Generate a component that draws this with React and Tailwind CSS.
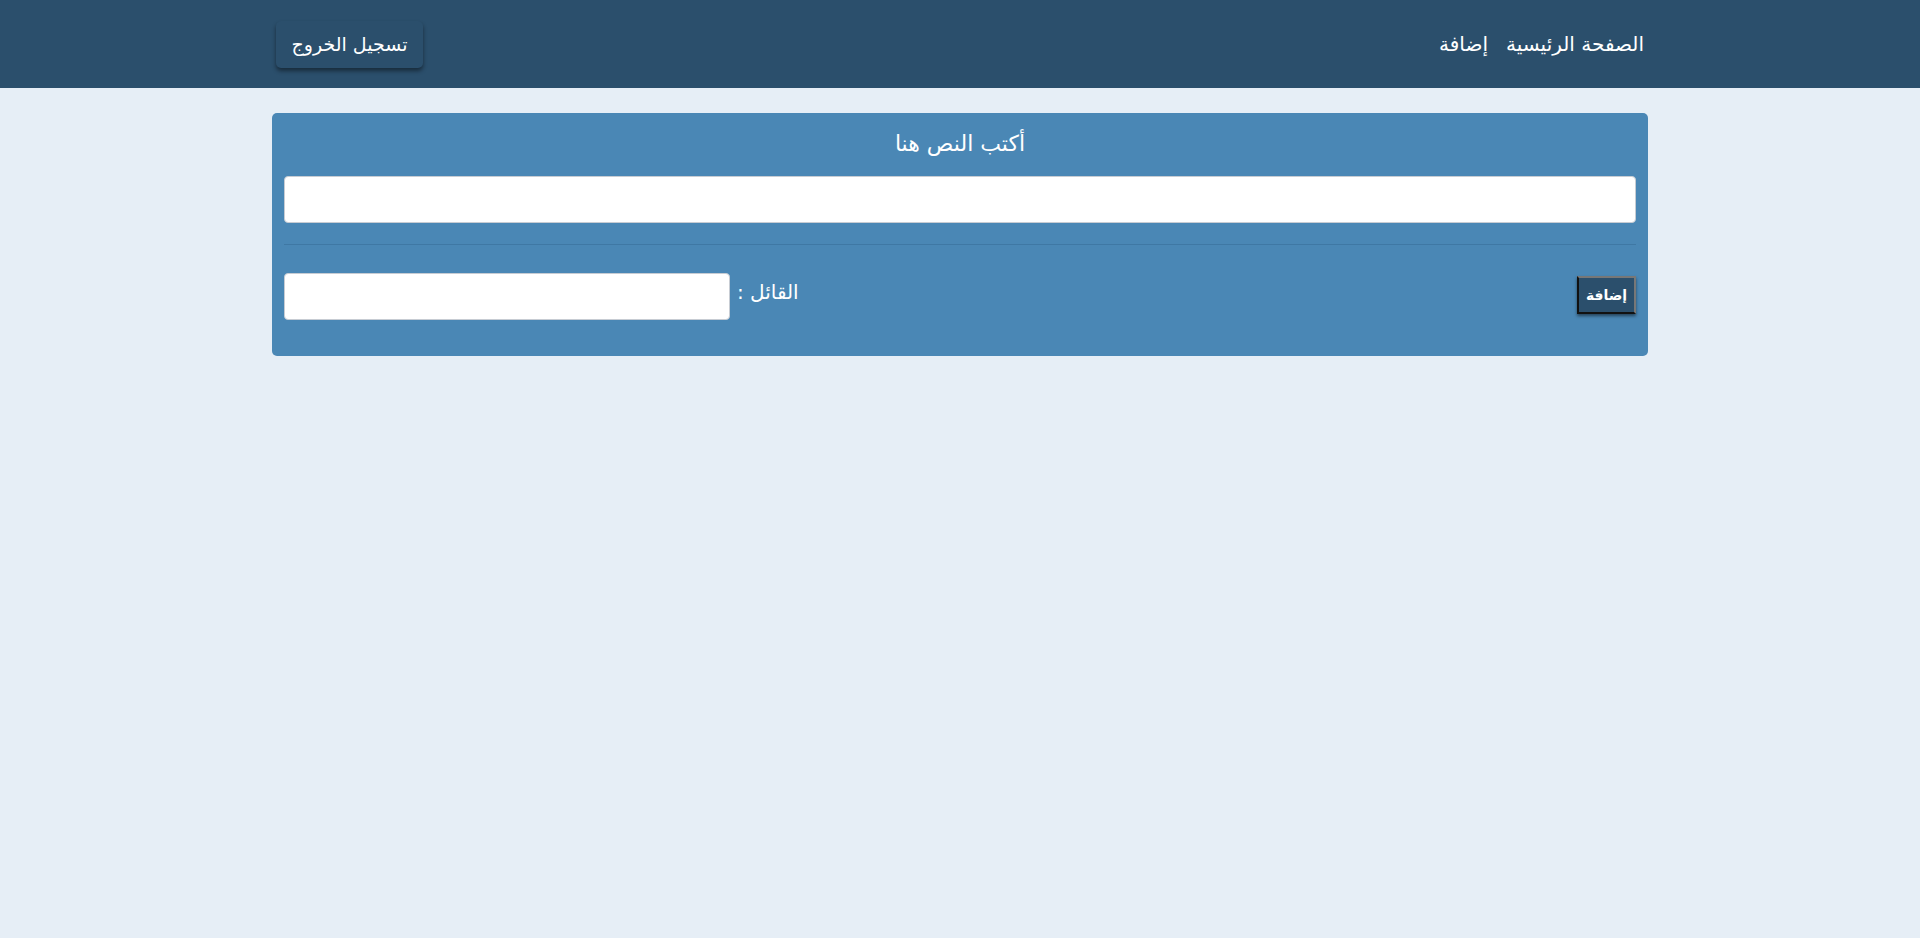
export default function App() {
  return (
    <div dir="rtl" className="min-h-screen bg-[#e6eef6] font-['DejaVu_Sans',sans-serif] text-white">
      {/* Navbar */}
      <header className="h-[88px] bg-[#2b4f6c]">
        <div className="mx-auto flex h-full w-[1376px] items-center justify-between px-[4px]">
          <nav className="flex items-center gap-[18px] text-[20px]">
            <a href="#" className="text-white">الصفحة الرئيسية</a>
            <a href="#" className="text-white">إضافة</a>
          </nav>
          <button className="h-[47px] w-[147px] rounded-[5px] bg-[#2b4f6c] text-[19px] text-white shadow-[0_3px_4px_rgba(0,0,0,0.45)]">
            تسجيل الخروج
          </button>
        </div>
      </header>

      {/* Form card */}
      <main className="mx-auto mt-[25px] w-[1376px] rounded-[5px] bg-[#4a87b5] px-[12px] pt-[16px] pb-[36px]">
        <h2 className="text-center text-[22px] leading-[30px]">أكتب النص هنا</h2>
        <input
          type="text"
          className="mt-[17px] block h-[47px] w-full rounded-[4px] border border-[#c7ccd3] bg-white px-3 text-black outline-none"
        />
        <hr className="mt-[21px] border-t border-[#3f78a4]" />
        <div className="mt-[28px] flex items-center justify-between">
          <button className="mb-[3px] h-[38px] w-[59px] border-2 border-t-[#777] border-r-[#777] border-b-[#111] border-l-[#111] bg-[#2b4f6c] text-[14px] font-bold text-white shadow-[0_2px_3px_rgba(0,0,0,0.5)]">
            إضافة
          </button>
          <div className="flex items-center gap-[7px]">
            <label className="mb-[9px] text-[20px] leading-[30px]">القائل :</label>
            <input
              type="text"
              className="h-[47px] w-[446px] rounded-[4px] border border-[#c7ccd3] bg-white px-3 text-black outline-none"
            />
          </div>
        </div>
      </main>
    </div>
  );
}
